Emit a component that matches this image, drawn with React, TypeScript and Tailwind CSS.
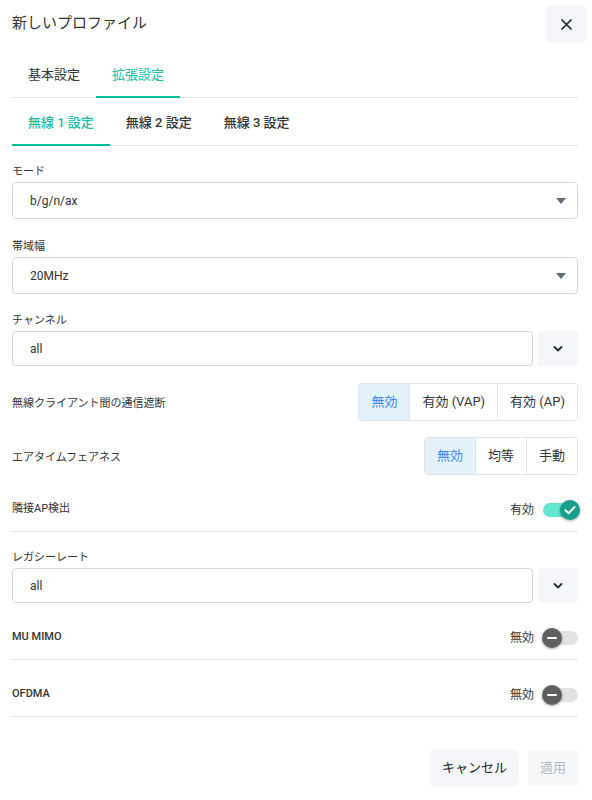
import React, { useState } from 'react';

const font = { fontFamily: 'Roboto, "Noto Sans CJK JP", sans-serif' };

const Caret = () => (
  <svg width="10" height="6" viewBox="0 0 10 6" className="shrink-0">
    <path d="M0 0h10L5 6z" fill="#5f6b7a" />
  </svg>
);

const Chevron = () => (
  <svg width="10" height="6" viewBox="0 0 10 6">
    <path d="M1.5 1l3.5 3.5L8.5 1" fill="none" stroke="#1e2a3b" strokeWidth="1.8" strokeLinecap="round" strokeLinejoin="round" />
  </svg>
);

const Label: React.FC<{ children: React.ReactNode }> = ({ children }) => (
  <div className="text-[11px] leading-5 text-[#333]">{children}</div>
);

const Select: React.FC<{ value: string }> = ({ value }) => (
  <div className="h-[37px] border border-[#d3d7dd] rounded flex items-center justify-between pl-[17px] pr-[11px] text-[12px] text-[#333]">
    <span>{value}</span>
    <Caret />
  </div>
);

const Combo: React.FC<{ value: string }> = ({ value }) => (
  <div className="flex gap-[5px]">
    <div className="flex-1 h-[35px] border border-[#d3d7dd] rounded flex items-center pl-[17px] text-[12px] text-[#333]">{value}</div>
    <button className="w-[40px] h-[35px] rounded bg-[#f5f6fa] flex items-center justify-center">
      <Chevron />
    </button>
  </div>
);

const Segmented: React.FC<{ label: string; options: string[] }> = ({ label, options }) => {
  const [active, setActive] = useState(0);
  return (
    <div className="flex items-center justify-between">
      <span className="pt-1 text-[11px] text-[#333]">{label}</span>
      <div className="flex h-[38px] border border-[#dfe2e6] rounded overflow-hidden">
        {options.map((o, i) => (
          <button
            key={o}
            onClick={() => setActive(i)}
            className={
              'px-3 text-[13px] ' +
              (i > 0 ? 'border-l border-[#dfe2e6] ' : '') +
              (i === active ? 'bg-[#e3f1fd] text-[#3d8af7]' : 'bg-white text-[#333]')
            }
          >
            {o}
          </button>
        ))}
      </div>
    </div>
  );
};

const Toggle: React.FC<{ on: boolean }> = ({ on }) => (
  <div className="relative w-[35px] h-[22px] flex items-center">
    <div className={'w-[35px] h-[14px] rounded-full ' + (on ? 'bg-[#62e6cf]' : 'bg-[#e2e2e2]')} />
    {on ? (
      <div className="absolute right-[-2px] top-px w-5 h-5 rounded-full bg-[#179f8b] shadow-[0_1px_3px_rgba(0,0,0,0.35)] flex items-center justify-center">
        <svg width="12" height="10" viewBox="0 0 12 10">
          <path d="M1.5 5.2l3 3L10.5 2" fill="none" stroke="#fff" strokeWidth="2" strokeLinecap="round" strokeLinejoin="round" />
        </svg>
      </div>
    ) : (
      <div className="absolute left-[-1px] top-px w-5 h-5 rounded-full bg-[#5f5f5f] shadow-[0_1px_3px_rgba(0,0,0,0.35)] flex items-center justify-center">
        <div className="w-[10px] h-[2px] bg-white rounded" />
      </div>
    )}
  </div>
);

const ToggleRow: React.FC<{ label: string; on: boolean; bold?: boolean }> = ({ label, on, bold }) => (
  <div className="h-[57px] pt-[13px] flex items-center justify-between border-b border-[#e3e5e8]">
    <span className={'text-[11px] text-[#333] ' + (bold ? 'font-medium' : '')}>{label}</span>
    <div className="flex items-center gap-[9px]">
      <span className="text-[12px] text-[#333]">{on ? '有効' : '無効'}</span>
      <Toggle on={on} />
    </div>
  </div>
);

export default function App() {
  const [tab, setTab] = useState(1);
  const [sub, setSub] = useState(0);
  return (
    <div className="w-[592px] min-h-[800px] bg-white pl-3 pr-[14px]" style={font}>
      <div className="h-[47px] flex items-center justify-between">
        <h1 className="text-[15px] text-[#333]">新しいプロファイル</h1>
        <button className="w-[41px] h-[36px] -mr-[9px] mt-px rounded bg-[#f5f6fa] flex items-center justify-center">
          <svg width="11" height="11" viewBox="0 0 11 11">
            <path d="M1 1l9 9M10 1l-9 9" stroke="#1e2a3b" strokeWidth="1.7" strokeLinecap="round" />
          </svg>
        </button>
      </div>

      <div className="flex h-[51px] border-b border-[#e3e5e8]">
        {['基本設定', '拡張設定'].map((t, i) => (
          <button
            key={t}
            onClick={() => setTab(i)}
            className={
              'px-4 pt-[6px] text-[13px] border-b-2 -mb-px ' +
              (i === tab ? 'border-[#00bfa0] text-[#17bfa3]' : 'border-transparent text-[#333]')
            }
          >
            {t}
          </button>
        ))}
      </div>

      <div className="flex h-[48px] border-b border-[#e3e5e8]">
        {['無線 1 設定', '無線 2 設定', '無線 3 設定'].map((t, i) => (
          <button
            key={t}
            onClick={() => setSub(i)}
            className={
              'px-4 pt-1 text-[13px] font-medium border-b-2 -mb-px ' +
              (i === sub ? 'border-[#00bfa0] text-[#17bfa3]' : 'border-transparent text-[#333]')
            }
          >
            {t}
          </button>
        ))}
      </div>

      <div className="pt-4 flex flex-col">
        <Label>モード</Label>
        <Select value="b/g/n/ax" />
        <div className="mt-[18px]">
          <Label>帯域幅</Label>
          <Select value="20MHz" />
        </div>
        <div className="mt-[17px]">
          <Label>チャンネル</Label>
          <Combo value="all" />
        </div>
        <div className="mt-[17px]">
          <Segmented label="無線クライアント間の通信遮断" options={['無効', '有効 (VAP)', '有効 (AP)']} />
        </div>
        <div className="mt-4">
          <Segmented label="エアタイムフェアネス" options={['無効', '均等', '手動']} />
        </div>
        <ToggleRow label="隣接AP検出" on />
        <div className="mt-4">
          <Label>レガシーレート</Label>
          <Combo value="all" />
        </div>
        <ToggleRow label="MU MIMO" on={false} bold />
        <ToggleRow label="OFDMA" on={false} bold />
        <div className="flex justify-end gap-[9px] mt-[33px]">
          <button className="h-9 px-3 rounded bg-[#f5f6fa] text-[13px] text-[#222]">キャンセル</button>
          <button className="h-9 px-3 rounded bg-[#f7f8fa] text-[13px] text-[#b3b8bf]" disabled>適用</button>
        </div>
      </div>
    </div>
  );
}
